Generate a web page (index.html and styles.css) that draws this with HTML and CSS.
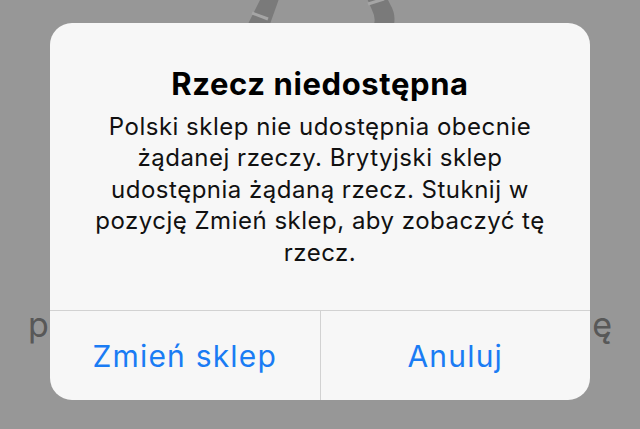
FILE: index.html
```html
<!DOCTYPE html>
<html lang="pl">
<head>
<meta charset="utf-8">
<link rel="stylesheet" href="styles.css">
</head>
<body>
<div class="screen">
  <svg class="bg-logo" width="640" height="30" viewBox="0 0 640 30">
    <path d="M262 -4 L248 24 L270 24 L280 -4 Z" fill="#7a7a7a"/>
    <path d="M252 13 L268 19" stroke="#a5a5a5" stroke-width="3"/>
    <path d="M366 -4 L372 10 Q376 18 374 24 L394 24 Q396 14 390 4 L386 -4 Z" fill="#7a7a7a"/>
    <path d="M368 4 L384 -1" stroke="#a5a5a5" stroke-width="3"/>
  </svg>
  <div class="bg-row"><span>p</span><span>ę</span></div>

  <div class="alert">
    <div class="alert-body">
      <h1 class="alert-title">Rzecz niedostępna</h1>
      <p class="alert-msg">Polski sklep nie udostępnia obecnie żądanej rzeczy. Brytyjski sklep udostępnia żądaną rzecz. Stuknij w pozycję Zmień sklep, aby zobaczyć tę rzecz.</p>
    </div>
    <div class="alert-actions">
      <div class="alert-btn">Zmień sklep</div>
      <div class="alert-btn">Anuluj</div>
    </div>
  </div>
</div>
</body>
</html>
```
FILE: styles.css
```css
* { box-sizing: border-box; }
html, body { margin: 0; padding: 0; }
body {
  width: 640px;
  height: 429px;
  overflow: hidden;
  background: #979797;
  font-family: Inter, "Noto Sans", "Liberation Sans", sans-serif;
}
.screen {
  position: relative;
  width: 640px;
  height: 429px;
}
.bg-logo {
  position: absolute;
  left: 0;
  top: 0;
}
.bg-row {
  position: absolute;
  left: 28px;
  right: 28px;
  top: 304px;
  display: flex;
  justify-content: space-between;
  font-size: 34px;
  color: #585858;
}
.alert {
  position: absolute;
  left: 50px;
  top: 23px;
  width: 540px;
  height: 377px;
  background: #f7f7f7;
  border-radius: 22px;
  display: flex;
  flex-direction: column;
  overflow: hidden;
}
.alert-body {
  flex: 1;
  padding: 42px 31px 0;
  text-align: center;
  border-bottom: 1px solid #d2d2d2;
}
.alert-title {
  margin: 0;
  font-size: 31px;
  font-weight: 700;
  line-height: 38px;
  color: #000;
  letter-spacing: 0.6px;
}
.alert-msg {
  margin: 7.5px 0 0;
  font-size: 24px;
  line-height: 31.5px;
  color: #111;
  letter-spacing: 0.5px;
}
.alert-actions {
  height: 89px;
  display: flex;
}
.alert-btn {
  flex: 1;
  display: flex;
  align-items: center;
  justify-content: center;
  font-size: 30px;
  letter-spacing: 1.2px;
  color: #1a7cf4;
}
.alert-btn + .alert-btn {
  border-left: 1px solid #d2d2d2;
}
```
